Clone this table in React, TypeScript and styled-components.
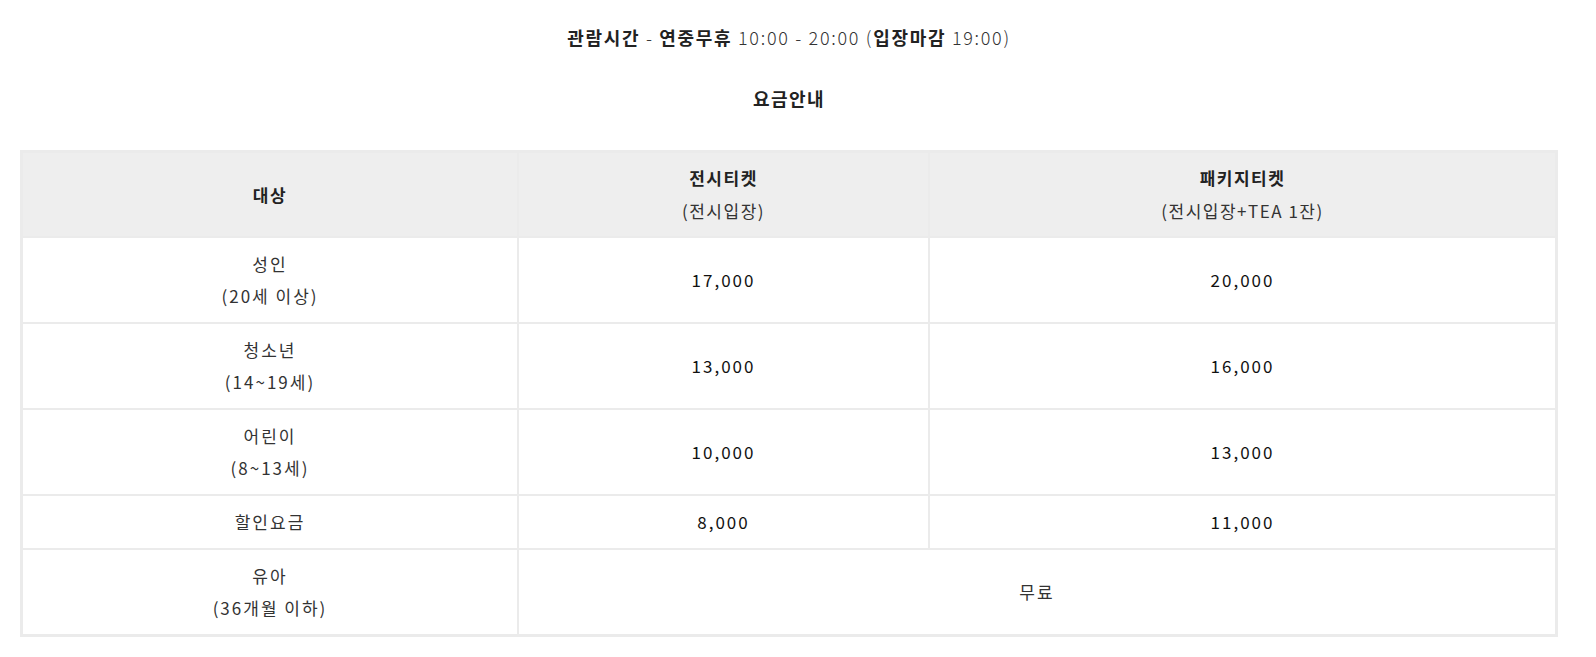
import styled, { createGlobalStyle } from "styled-components";

const GlobalStyle = createGlobalStyle`
  body {
    margin: 0;
    background: #ffffff;
    font-family: "Noto Sans CJK KR", "Noto Sans", sans-serif;
    color: #222222;
  }
`;

const Page = styled.div`
  width: 1538px;
  margin-left: 20px;
  padding-top: 21px;
`;

const HoursLine = styled.p`
  margin: 0;
  text-align: center;
  font-size: 18px;
  line-height: 32px;
  letter-spacing: 1.7px;
  font-weight: 300;
  color: #333333;
`;

const Strong = styled.b`
  font-weight: 700;
  color: #222222;
`;

const Title = styled.h3`
  margin: 29px 0 36px;
  text-align: center;
  font-size: 18px;
  line-height: 32px;
  letter-spacing: 1.4px;
  font-weight: 700;
  color: #222222;
`;

const PriceTable = styled.table`
  width: 100%;
  border-collapse: collapse;
  table-layout: fixed;
  border: 3px solid #ebebeb;
`;

const HeadCell = styled.th<{ $w?: number }>`
  width: ${(p) => (p.$w ? `${p.$w}px` : "auto")};
  background: #eeeeee;
  border: 2px solid #ebebeb;
  padding: 8px 8px 9px;
  font-size: 17px;
  line-height: 33px;
  letter-spacing: 1.5px;
  font-weight: 700;
  color: #222222;
`;

const Sub = styled.span`
  display: block;
  font-weight: 400;
  color: #333333;
`;

const Cell = styled.td<{ $num?: boolean }>`
  border: 2px solid #ebebeb;
  padding: 10px 8px;
  text-align: center;
  font-size: 17px;
  line-height: 32px;
  letter-spacing: 2px;
  font-weight: 400;
  color: ${(p) => (p.$num ? "#111111" : "#333333")};
`;

type Row = { target: string; age?: string; exhibit?: string; pack?: string };

const rows: Row[] = [
  { target: "성인", age: "(20세 이상)", exhibit: "17,000", pack: "20,000" },
  { target: "청소년", age: "(14~19세)", exhibit: "13,000", pack: "16,000" },
  { target: "어린이", age: "(8~13세)", exhibit: "10,000", pack: "13,000" },
  { target: "할인요금", exhibit: "8,000", pack: "11,000" },
];

function App() {
  return (
    <>
      <GlobalStyle />
      <Page>
        <HoursLine>
          <Strong>관람시간</Strong> - <Strong>연중무휴</Strong> 10:00 - 20:00 (
          <Strong>입장마감</Strong> 19:00)
        </HoursLine>
        <Title>요금안내</Title>
        <PriceTable>
          <thead>
            <tr>
              <HeadCell $w={478}>대상</HeadCell>
              <HeadCell $w={393}>
                전시티켓
                <Sub>(전시입장)</Sub>
              </HeadCell>
              <HeadCell>
                패키지티켓
                <Sub>(전시입장+TEA 1잔)</Sub>
              </HeadCell>
            </tr>
          </thead>
          <tbody>
            {rows.map((r) => (
              <tr key={r.target}>
                <Cell>
                  {r.target}
                  {r.age && <Sub>{r.age}</Sub>}
                </Cell>
                <Cell $num>{r.exhibit}</Cell>
                <Cell $num>{r.pack}</Cell>
              </tr>
            ))}
            <tr>
              <Cell>
                유아
                <Sub>(36개월 이하)</Sub>
              </Cell>
              <Cell colSpan={2}>무료</Cell>
            </tr>
          </tbody>
        </PriceTable>
      </Page>
    </>
  );
}

export default App;
